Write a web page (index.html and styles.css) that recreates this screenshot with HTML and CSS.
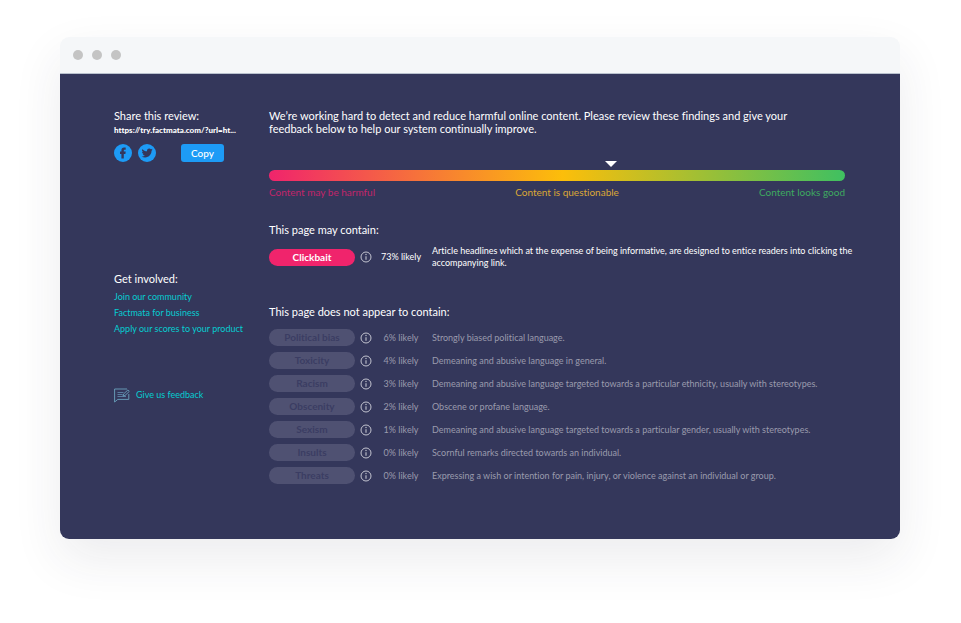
FILE: index.html
```html
<!DOCTYPE html>
<html lang="en">
<head>
<meta charset="utf-8">
<title>Content review</title>
<link rel="stylesheet" href="styles.css">
</head>
<body>
<svg class="sprite" aria-hidden="true">
  <symbol id="info" viewBox="0 0 12 12">
    <circle cx="6" cy="6" r="5" fill="none" stroke="currentColor"/>
    <path d="M6 5.2V8.8" stroke="currentColor" stroke-width="1.1"/>
    <circle cx="6" cy="3.5" r=".7" fill="currentColor"/>
  </symbol>
</svg>
<div class="window">
  <header class="titlebar"><span class="dot"></span><span class="dot"></span><span class="dot"></span></header>
  <div class="page">
    <aside class="sidebar">
      <section class="share">
        <h2>Share this review:</h2>
        <p class="url">https://try.factmata.com/?url=ht...</p>
        <div class="actions">
          <a class="social" href="#" aria-label="Share on Facebook">
            <svg viewBox="0 0 18 18"><circle cx="9" cy="9" r="9" fill="#1d9bf6"/><path fill="#34375b" d="M7.4 14.6V9.9H6V7.6h1.4V6.4c0-1.9 1-2.8 2.7-2.8h1.6v2.2h-1c-.7 0-.9.3-.9.9v.9h1.9l-.3 2.3H9.8v4.7z"/></svg>
          </a>
          <a class="social" href="#" aria-label="Share on Twitter">
            <svg viewBox="0 0 18 18"><circle cx="9" cy="9" r="9" fill="#1d9bf6"/><path fill="#34375b" transform="translate(3.6 3.5) scale(.46)" d="M23.95 4.57a10 10 0 0 1-2.82.78 4.96 4.96 0 0 0 2.16-2.73c-.95.56-2 .96-3.13 1.19a4.92 4.92 0 0 0-8.38 4.48C7.69 8.1 4.07 6.13 1.64 3.16a4.92 4.92 0 0 0 1.52 6.57 4.9 4.9 0 0 1-2.23-.61v.06c0 2.39 1.69 4.37 3.95 4.83a5 5 0 0 1-2.21.08 4.94 4.94 0 0 0 4.6 3.42A9.87 9.87 0 0 1 0 19.54a13.99 13.99 0 0 0 7.55 2.21c9.05 0 14-7.5 14-13.98 0-.21 0-.42-.02-.63a9.94 9.94 0 0 0 2.42-2.57z"/></svg>
          </a>
          <button class="copy" type="button">Copy</button>
        </div>
      </section>
      <nav class="involved">
        <h2>Get involved:</h2>
        <a href="#">Join our community</a>
        <a href="#">Factmata for business</a>
        <a href="#">Apply our scores to your product</a>
      </nav>
      <a class="feedback" href="#">
        <svg viewBox="0 0 16 15" fill="none" stroke="#6ba3bd" stroke-width=".9"><path d="M13 1H.6v13l3.2-2.6h11V6"/><path d="M3.5 4.5h6M3.5 6.5h5M3.5 8.5h8.5" stroke="#5d86a8"/><path d="M9 7.9l.5-1.9 4.4-4 1.4 1.4L11 7.5z" fill="#34375b"/></svg>
        Give us feedback
      </a>
    </aside>
    <main class="report">
      <p class="intro">We’re working hard to detect and reduce harmful online content. Please review these findings and give your feedback below to help our system continually improve.</p>
      <div class="scale">
        <div class="track" role="img" aria-label="Content score"><span class="pointer"></span></div>
        <div class="legend"><span class="bad">Content may be harmful</span><span class="mid">Content is questionable</span><span class="good">Content looks good</span></div>
      </div>
      <section class="found">
        <h2>This page may contain:</h2>
        <table>
          <tr><th scope="row"><span class="pill">Clickbait</span></th><td class="info"><svg><use href="#info"/></svg></td><td class="odds">73% likely</td><td class="about">Article headlines which at the expense of being informative, are designed to entice readers into clicking the<br>accompanying link.</td></tr>
        </table>
      </section>
      <section class="absent">
        <h2>This page does not appear to contain:</h2>
        <table>
          <tr><th scope="row"><span class="pill">Political bias</span></th><td class="info"><svg><use href="#info"/></svg></td><td class="odds">6% likely</td><td class="about">Strongly biased political language.</td></tr>
          <tr><th scope="row"><span class="pill">Toxicity</span></th><td class="info"><svg><use href="#info"/></svg></td><td class="odds">4% likely</td><td class="about">Demeaning and abusive language in general.</td></tr>
          <tr><th scope="row"><span class="pill">Racism</span></th><td class="info"><svg><use href="#info"/></svg></td><td class="odds">3% likely</td><td class="about">Demeaning and abusive language targeted towards a particular ethnicity, usually with stereotypes.</td></tr>
          <tr><th scope="row"><span class="pill">Obscenity</span></th><td class="info"><svg><use href="#info"/></svg></td><td class="odds">2% likely</td><td class="about">Obscene or profane language.</td></tr>
          <tr><th scope="row"><span class="pill">Sexism</span></th><td class="info"><svg><use href="#info"/></svg></td><td class="odds">1% likely</td><td class="about">Demeaning and abusive language targeted towards a particular gender, usually with stereotypes.</td></tr>
          <tr><th scope="row"><span class="pill">Insults</span></th><td class="info"><svg><use href="#info"/></svg></td><td class="odds">0% likely</td><td class="about">Scornful remarks directed towards an individual.</td></tr>
          <tr><th scope="row"><span class="pill">Threats</span></th><td class="info"><svg><use href="#info"/></svg></td><td class="odds">0% likely</td><td class="about">Expressing a wish or intention for pain, injury, or violence against an individual or group.</td></tr>
        </table>
      </section>
    </main>
  </div>
</div>
</body>
</html>
```
FILE: styles.css
```css
* { box-sizing: border-box; }
body {
  margin: 0;
  padding: 37px 61px 84px 60px;
  background: #fff;
  color: #fff;
  font: 9px/12px Lato, "Liberation Sans", sans-serif;
  font-variant-ligatures: none;
}
h2, p { margin: 0; font-size: 11px; line-height: 13px; font-weight: 400; }
a { color: #06cdd1; text-decoration: none; }
svg { display: block; }
.sprite { position: absolute; width: 0; height: 0; }

.window {
  border-radius: 9px;
  box-shadow: 0 20px 50px rgba(40, 40, 70, .09);
}
.titlebar {
  display: flex;
  align-items: center;
  gap: 9px;
  height: 37px;
  padding-left: 13px;
  border-radius: 9px 9px 0 0;
  background: #f5f7f9;
  border-bottom: 1px solid #b9c1ce;
}
.dot { width: 10px; height: 10px; border-radius: 50%; background: #c4c4c4; }

.page {
  display: grid;
  grid-template-columns: 155px 1fr;
  padding: 35px 55px 52px 54px;
  border-radius: 0 0 9px 9px;
  background: #34375b;
}

.share .url { font-size: 8px; font-weight: 900; line-height: 16px; }
.actions { display: flex; align-items: center; gap: 6px; margin-top: 6px; }
.social svg { width: 18px; height: 18px; }
.copy {
  width: 43px;
  height: 18px;
  margin-left: 19px;
  padding: 0;
  border: 0;
  border-radius: 3px;
  background: #1d9bf6;
  color: #fff;
  font: 500 10px/18px Lato, sans-serif;
}
.involved { display: flex; flex-direction: column; margin-top: 110px; }
.involved h2 { margin-bottom: 4px; }
.involved a { line-height: 16px; }
.feedback { display: flex; gap: 6px; margin-top: 51px; line-height: 14px; }
.feedback svg { width: 16px; height: 15px; }

.intro { padding-right: 30px; }
.track {
  position: relative;
  height: 11px;
  margin-top: 35px;
  border-radius: 6px;
  background: linear-gradient(90deg, #f0246c, #fcbe0a 51%, #3fc061);
}
.pointer {
  position: absolute;
  left: 59%;
  top: -9px;
  margin-left: -4px;
  border: solid transparent;
  border-width: 6px 6px 0;
  border-top-color: #fff;
}
.legend {
  display: flex;
  justify-content: space-between;
  margin-top: 5px;
  font-size: 10px;
  line-height: 13px;
}
.bad { color: #c2256a; }
.mid { color: #dba736; }
.good { color: #3eaa60; }

.found { margin-top: 24px; }
.absent { margin-top: 36px; }
.found h2 { margin-bottom: 9px; }
.absent h2 { margin-bottom: 8px; }
table { width: 100%; border-collapse: collapse; table-layout: fixed; }
th, td { height: 23px; padding: 0; vertical-align: middle; text-align: left; }
.found td, .found th { height: 24px; }
th { width: 86px; }
.pill {
  display: block;
  border-radius: 9px;
  background: #f0246c;
  font-size: 10px;
  font-weight: 700;
  line-height: 17px;
  text-align: center;
}
.info { width: 22px; }
.info svg { width: 12px; height: 12px; margin: 0 auto; color: #c3c4d0; }
.odds { width: 48px; text-align: center; }
.about { padding-left: 7px; white-space: nowrap; }
.absent .pill { background: #4f5172; color: #3b3d63; }
.absent .odds, .absent .about { color: #9a9bad; }

@media (max-width: 900px) {
  .about { white-space: normal; }
}
```
